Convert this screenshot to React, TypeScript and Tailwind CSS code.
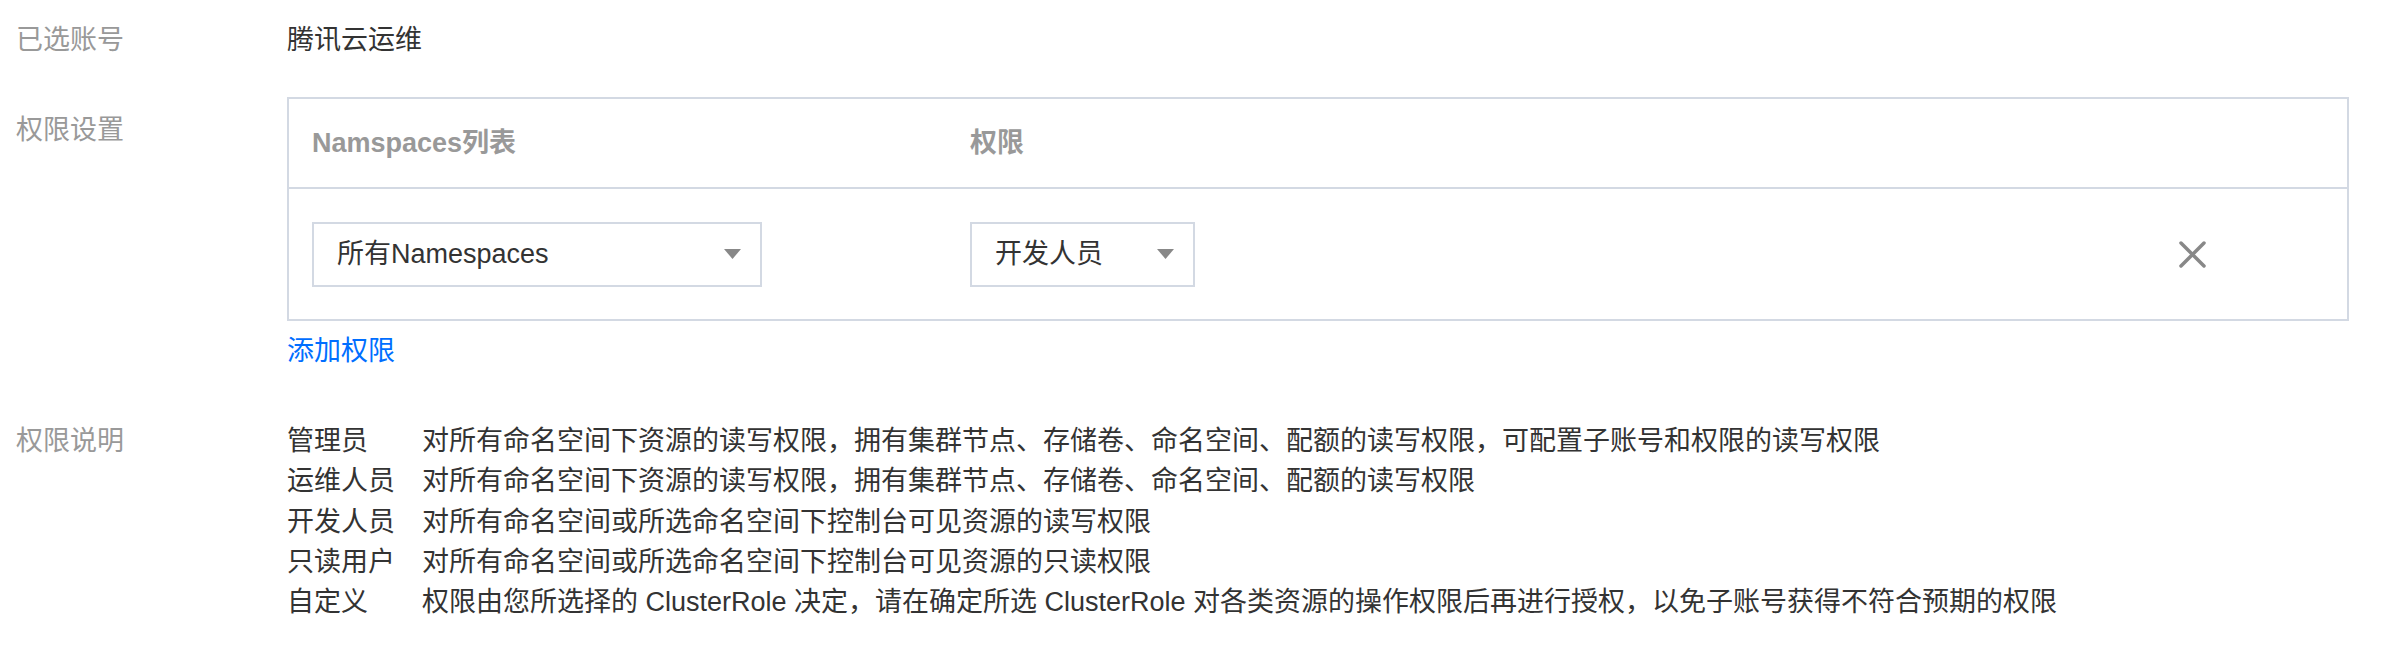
import React from 'react';

const roles = [
    { name: '管理员', desc: '对所有命名空间下资源的读写权限，拥有集群节点、存储卷、命名空间、配额的读写权限，可配置子账号和权限的读写权限' },
    { name: '运维人员', desc: '对所有命名空间下资源的读写权限，拥有集群节点、存储卷、命名空间、配额的读写权限' },
    { name: '开发人员', desc: '对所有命名空间或所选命名空间下控制台可见资源的读写权限' },
    { name: '只读用户', desc: '对所有命名空间或所选命名空间下控制台可见资源的只读权限' },
    { name: '自定义', desc: '权限由您所选择的 ClusterRole 决定，请在确定所选 ClusterRole 对各类资源的操作权限后再进行授权，以免子账号获得不符合预期的权限' },
];

const Arrow = () => (
    <svg width="17" height="10" viewBox="0 0 17 10">
        <polygon points="0,0 17,0 8.5,10" fill="#888888" />
    </svg>
);

const Select = ({ value, width }: { value: string; width: string }) => (
    <div className={`${width} h-[65px] border-2 border-[#d3d9e3] bg-white flex items-center justify-between pl-[23px] pr-[19px] text-[#333333]`}>
        <span className="leading-[40px]">{value}</span>
        <Arrow />
    </div>
);

const App = () => {
    return (
        <div className="w-full min-h-screen bg-white pr-[35px] text-[27px] font-['Liberation_Sans','Noto_Sans_CJK_SC',sans-serif]">
            {/* 已选账号 */}
            <div className="flex pt-[20px]">
                <div className="w-[287px] shrink-0 pl-[16px] leading-[40px] text-[#999999]">已选账号</div>
                <div className="leading-[40px] text-[#333333]">腾讯云运维</div>
            </div>

            {/* 权限设置 */}
            <div className="flex mt-[37px]">
                <div className="w-[287px] shrink-0 pl-[16px] pt-[13px] leading-[40px] text-[#999999]">权限设置</div>
                <div className="flex-1">
                    <div className="border-2 border-[#d3d9e3]">
                        <div className="flex items-center h-[90px] border-b-2 border-[#d3d9e3] font-bold text-[#999999]">
                            <div className="w-[658px] pl-[23px]">Namspaces列表</div>
                            <div className="flex-1 pl-[23px]">权限</div>
                            <div className="w-[191px]" />
                        </div>
                        <div className="flex items-center h-[130px]">
                            <div className="w-[658px] pl-[23px]">
                                <Select value="所有Namespaces" width="w-[450px]" />
                            </div>
                            <div className="flex-1 pl-[23px]">
                                <Select value="开发人员" width="w-[225px]" />
                            </div>
                            <div className="w-[191px] pl-[23px] flex items-center">
                                <svg width="27" height="27" viewBox="0 0 27 27">
                                    <path d="M2 2 L25 25 M25 2 L2 25" stroke="#888888" strokeWidth="3.5" strokeLinecap="round" />
                                </svg>
                            </div>
                        </div>
                    </div>
                    <div className="mt-[10px] leading-[40px] text-[#006eff]">添加权限</div>
                </div>
            </div>

            {/* 权限说明 */}
            <div className="flex mt-[50px]">
                <div className="w-[287px] shrink-0 pl-[16px] leading-[40.25px] text-[#999999]">权限说明</div>
                <div className="flex flex-col text-[#333333]">
                    {roles.map(r => (
                        <div key={r.name} className="flex leading-[40.25px] whitespace-nowrap">
                            <div className="w-[135px] shrink-0">{r.name}</div>
                            <div>{r.desc}</div>
                        </div>
                    ))}
                </div>
            </div>
        </div>
    );
};

export default App;
